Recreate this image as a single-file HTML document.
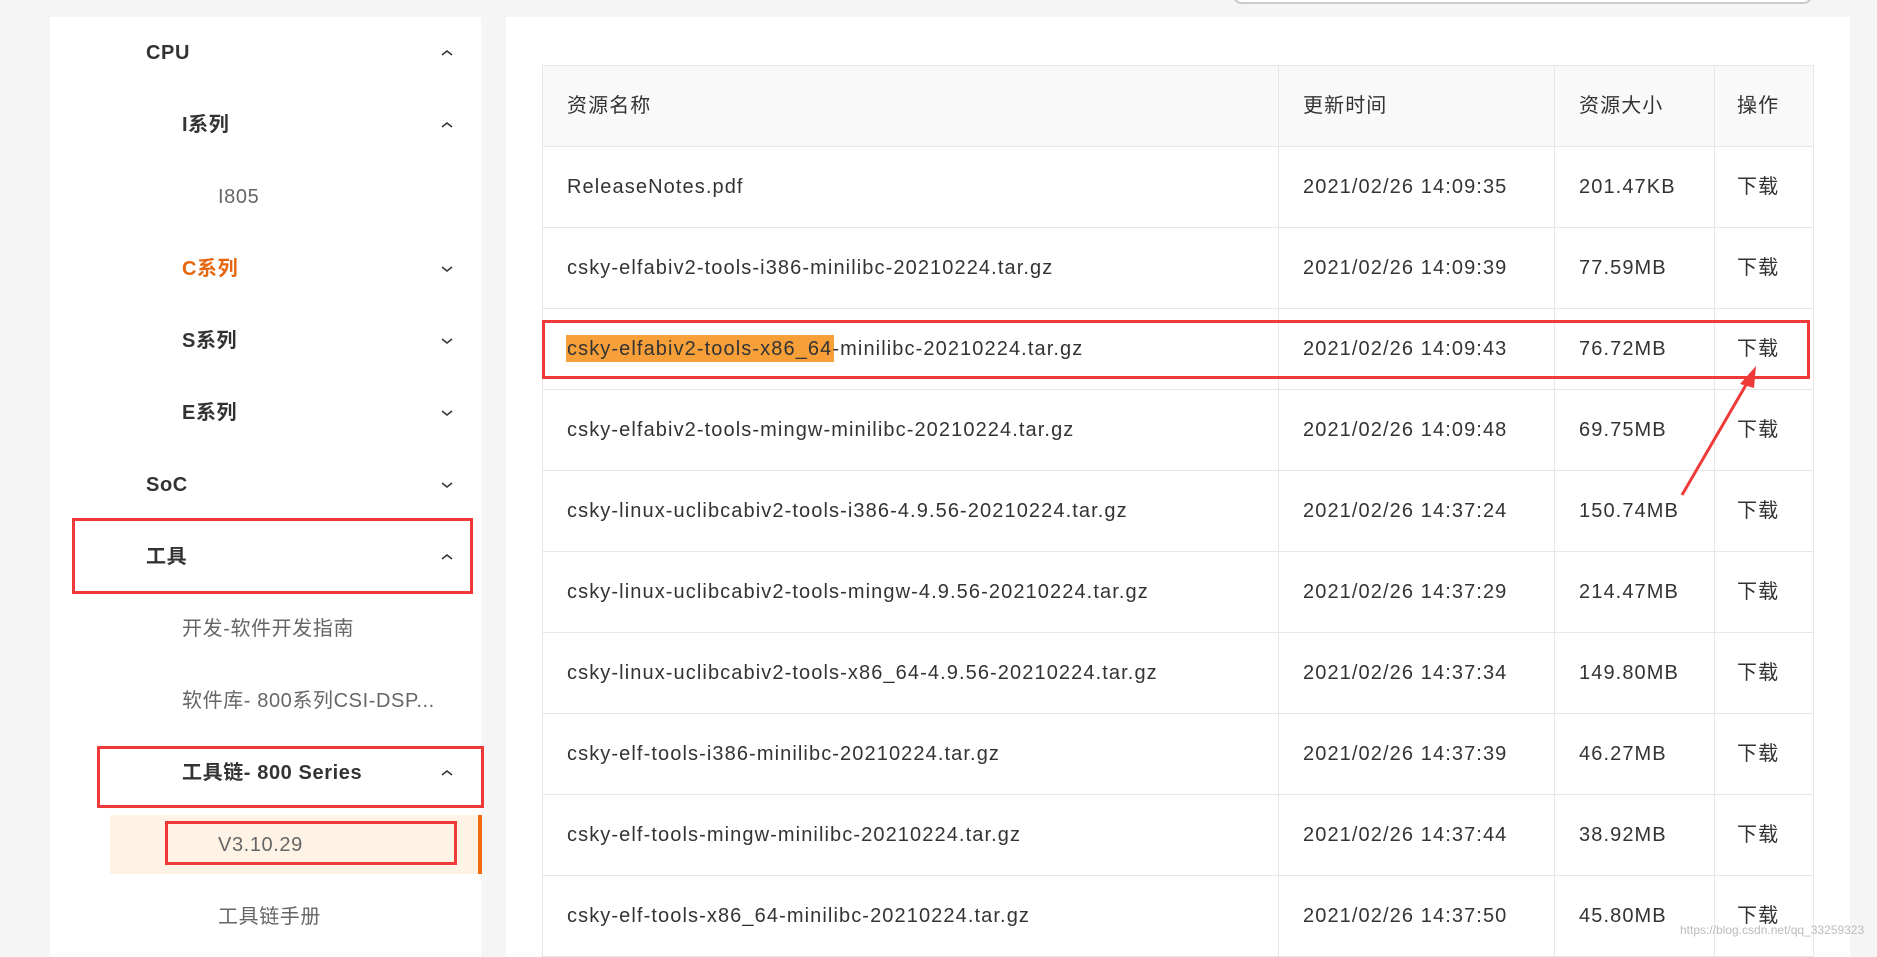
<!DOCTYPE html>
<html><head><meta charset="utf-8"><style>
*{margin:0;padding:0;box-sizing:border-box}
body{width:1877px;height:952px;background:#f5f5f5;position:relative;overflow:hidden;font-family:"Liberation Sans","Noto Sans CJK SC",sans-serif;color:#333}
.sb{position:absolute;left:50px;top:17px;width:431px;height:940px;background:#fff}
.it{position:absolute;font-size:20px;line-height:24px;white-space:nowrap;letter-spacing:0.6px}
.b{font-weight:bold;color:#333}
.g{color:#666}
.ch{position:absolute;left:441px;width:12px;height:8px}
.main{position:absolute;left:506px;top:17px;width:1344px;height:940px;background:#fff}
table{position:absolute;left:542px;top:65px;border-collapse:collapse;font-size:20px;color:#333;letter-spacing:1.1px}
td{border:1px solid #e6e6e6;height:81px;padding:0 0 0 24px;white-space:nowrap;line-height:24px}
td div{height:24px;line-height:24px;overflow:visible}
tr.h td{background:#f9f9f9;height:81px}
.rb{position:absolute;border:3px solid #f03a3a}
</style></head><body>
<div style="position:absolute;left:1232px;top:-20px;width:581px;height:24px;border:2px solid #ccc;border-radius:10px;background:#fff"></div>
<div class="sb"></div>
<div style="position:absolute;left:110px;top:815px;width:371px;height:59px;background:#fff3e6"></div>
<div style="position:absolute;left:478px;top:815px;width:4px;height:59px;background:#f06a0f"></div>
<div class="it b" style="left:146px;top:41px">CPU</div>
<div class="it b" style="left:182px;top:113px">I系列</div>
<div class="it g" style="left:218px;top:185px">I805</div>
<div class="it b" style="left:182px;top:257px;color:#e5660f">C系列</div>
<div class="it b" style="left:182px;top:329px">S系列</div>
<div class="it b" style="left:182px;top:401px">E系列</div>
<div class="it b" style="left:146px;top:473px">SoC</div>
<div class="it b" style="left:146px;top:545px">工具</div>
<div class="it g" style="left:182px;top:617px">开发-软件开发指南</div>
<div class="it g" style="left:182px;top:689px">软件库- 800系列CSI-DSP...</div>
<div class="it b" style="left:182px;top:761px">工具链- 800 Series</div>
<div class="it g" style="left:218px;top:833px">V3.10.29</div>
<div class="it g" style="left:218px;top:905px">工具链手册</div>
<svg class="ch" style="top:49px" viewBox="0 0 12 8"><path d="M1 6L6 2L11 6" fill="none" stroke="#333" stroke-width="1.5"/></svg>
<svg class="ch" style="top:121px" viewBox="0 0 12 8"><path d="M1 6L6 2L11 6" fill="none" stroke="#333" stroke-width="1.5"/></svg>
<svg class="ch" style="top:265px" viewBox="0 0 12 8"><path d="M1 2L6 6L11 2" fill="none" stroke="#333" stroke-width="1.5"/></svg>
<svg class="ch" style="top:337px" viewBox="0 0 12 8"><path d="M1 2L6 6L11 2" fill="none" stroke="#333" stroke-width="1.5"/></svg>
<svg class="ch" style="top:409px" viewBox="0 0 12 8"><path d="M1 2L6 6L11 2" fill="none" stroke="#333" stroke-width="1.5"/></svg>
<svg class="ch" style="top:481px" viewBox="0 0 12 8"><path d="M1 2L6 6L11 2" fill="none" stroke="#333" stroke-width="1.5"/></svg>
<svg class="ch" style="top:553px" viewBox="0 0 12 8"><path d="M1 6L6 2L11 6" fill="none" stroke="#333" stroke-width="1.5"/></svg>
<svg class="ch" style="top:769px" viewBox="0 0 12 8"><path d="M1 6L6 2L11 6" fill="none" stroke="#333" stroke-width="1.5"/></svg>
<div class="rb" style="left:72px;top:518px;width:401px;height:76px"></div>
<div class="rb" style="left:97px;top:746px;width:387px;height:62px"></div>
<div class="rb" style="left:165px;top:821px;width:292px;height:44px"></div>
<div class="main"></div>
<div style="position:absolute;left:566px;top:335px;width:268px;height:27px;background:#f7a03a"></div>
<table>
<colgroup><col style="width:736px"><col style="width:276px"><col style="width:160px"><col style="width:99px"></colgroup>
<tr class="h"><td><div>资源名称</div></td><td><div>更新时间</div></td><td><div>资源大小</div></td><td style="padding-left:22px"><div>操作</div></td></tr>
<tr><td><div>ReleaseNotes.pdf</div></td><td><div>2021/02/26 14:09:35</div></td><td><div>201.47KB</div></td><td style="padding-left:22px"><div>下载</div></td></tr>
<tr><td><div>csky-elfabiv2-tools-i386-minilibc-20210224.tar.gz</div></td><td><div>2021/02/26 14:09:39</div></td><td><div>77.59MB</div></td><td style="padding-left:22px"><div>下载</div></td></tr>
<tr><td><div>csky-elfabiv2-tools-x86_64-minilibc-20210224.tar.gz</div></td><td><div>2021/02/26 14:09:43</div></td><td><div>76.72MB</div></td><td style="padding-left:22px"><div>下载</div></td></tr>
<tr><td><div>csky-elfabiv2-tools-mingw-minilibc-20210224.tar.gz</div></td><td><div>2021/02/26 14:09:48</div></td><td><div>69.75MB</div></td><td style="padding-left:22px"><div>下载</div></td></tr>
<tr><td><div>csky-linux-uclibcabiv2-tools-i386-4.9.56-20210224.tar.gz</div></td><td><div>2021/02/26 14:37:24</div></td><td><div>150.74MB</div></td><td style="padding-left:22px"><div>下载</div></td></tr>
<tr><td><div>csky-linux-uclibcabiv2-tools-mingw-4.9.56-20210224.tar.gz</div></td><td><div>2021/02/26 14:37:29</div></td><td><div>214.47MB</div></td><td style="padding-left:22px"><div>下载</div></td></tr>
<tr><td><div>csky-linux-uclibcabiv2-tools-x86_64-4.9.56-20210224.tar.gz</div></td><td><div>2021/02/26 14:37:34</div></td><td><div>149.80MB</div></td><td style="padding-left:22px"><div>下载</div></td></tr>
<tr><td><div>csky-elf-tools-i386-minilibc-20210224.tar.gz</div></td><td><div>2021/02/26 14:37:39</div></td><td><div>46.27MB</div></td><td style="padding-left:22px"><div>下载</div></td></tr>
<tr><td><div>csky-elf-tools-mingw-minilibc-20210224.tar.gz</div></td><td><div>2021/02/26 14:37:44</div></td><td><div>38.92MB</div></td><td style="padding-left:22px"><div>下载</div></td></tr>
<tr><td><div>csky-elf-tools-x86_64-minilibc-20210224.tar.gz</div></td><td><div>2021/02/26 14:37:50</div></td><td><div>45.80MB</div></td><td style="padding-left:22px"><div>下载</div></td></tr>
</table>
<div class="rb" style="left:542px;top:320px;width:1268px;height:59px"></div>
<svg style="position:absolute;left:0;top:0" width="1877" height="952"><line x1="1682" y1="495" x2="1750" y2="378" stroke="#f03a3a" stroke-width="3"/><polygon points="1756,366 1740,384 1754,388" fill="#f03a3a"/></svg>
<div style="position:absolute;left:1680px;top:923px;font-size:12px;color:#bbb;white-space:nowrap">https://blog.csdn.net/qq_33259323</div>
</body></html>
